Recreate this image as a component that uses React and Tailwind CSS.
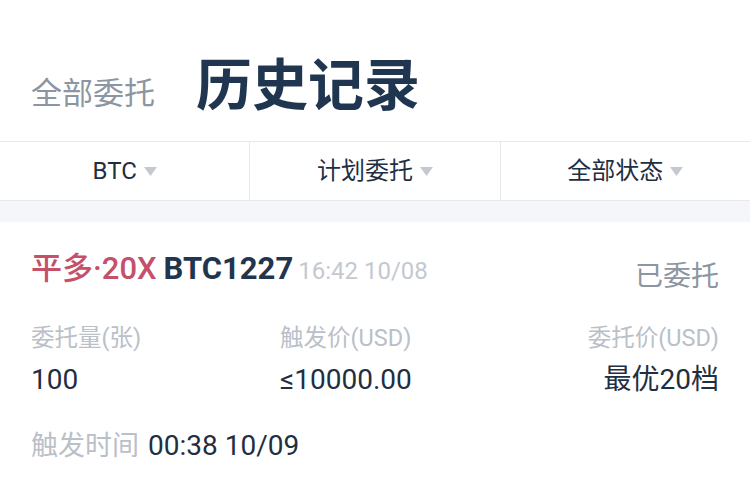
import React from 'react';

const font = { fontFamily: 'Roboto, "Noto Sans CJK SC", sans-serif' };

const Caret = () => (
  <svg width="13" height="9" viewBox="0 0 13 9" className="ml-[7px]">
    <path d="M0 0 L13 0 L6.5 9 Z" fill="#c4c9cf" />
  </svg>
);

const Filter = ({ label, border }) => (
  <div className={`flex-1 flex items-center justify-center ${border ? 'border-r border-[#e6e8ec]' : ''}`}>
    <span className="text-[24px] leading-none text-[#1f2f42]">{label}</span>
    <Caret />
  </div>
);

const App = () => {
  return (
    <div className="w-[750px] h-[483px] bg-white overflow-hidden" style={font}>
      <div className="h-[142px] flex items-center pt-[30px] pl-[31px] border-b border-[#e6e8ec]">
        <span className="text-[31px] leading-none text-[#8b96a2] mt-[15px]">全部委托</span>
        <span className="ml-[41px] text-[56px] font-bold text-[#1f3550] leading-none">历史记录</span>
      </div>
      <div className="h-[59px] flex border-b border-[#e6e8ec]">
        <Filter label="BTC" border />
        <Filter label="计划委托" border />
        <Filter label="全部状态" />
      </div>
      <div className="h-[21px] bg-[#f5f6fa]" />
      <div className="px-[31px] pt-[26px]">
        <div className="flex items-center justify-between h-[40px]">
          <div className="flex items-baseline leading-none">
            <span className="text-[31px] font-medium text-[#c5506a]">平多·20X</span>
            <span className="ml-[7px] text-[31px] font-bold text-[#1f3550]">BTC1227</span>
            <span className="ml-[5px] text-[24px] text-[#c4c9cf]">16:42 10/08</span>
          </div>
          <span className="text-[28px] leading-none text-[#8b96a2] mt-[18px]">已委托</span>
        </div>
        <div className="flex items-center h-[30px] mt-[36px] text-[23.5px] leading-none text-[#bac0c8]">
          <span className="w-[249px]">委托量(张)</span>
          <span className="flex-1">触发价(USD)</span>
          <span className="text-right">委托价(USD)</span>
        </div>
        <div className="flex items-center h-[34px] mt-[9px] text-[28px] leading-none text-[#1f2f42]">
          <span className="w-[249px]">100</span>
          <span className="flex-1">≤10000.00</span>
          <span className="text-right">最优20档</span>
        </div>
        <div className="flex items-center h-[34px] mt-[32px] leading-none">
          <span className="text-[27px] text-[#bac0c8]">触发时间</span>
          <span className="ml-[9px] text-[28px] text-[#1f2f42]">00:38 10/09</span>
        </div>
      </div>
    </div>
  );
};

export default App;
